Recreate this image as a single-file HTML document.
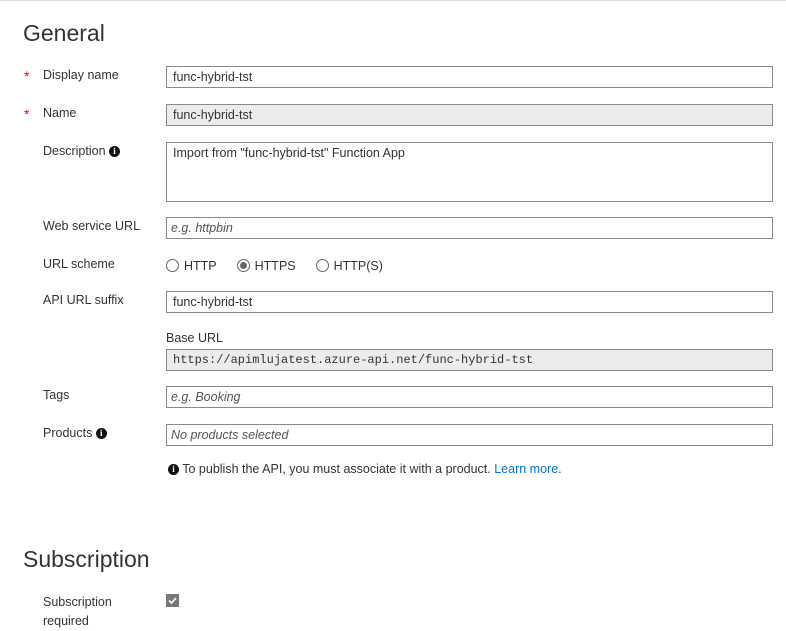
<!DOCTYPE html><html><head><style>
body{margin:0;width:786px;height:627px;background:#fff;font-family:"Liberation Sans",sans-serif;color:#333;font-size:12.5px;position:relative;overflow:hidden;border-top:1px solid #ddd;box-sizing:border-box}
.a{position:absolute}
h2{position:absolute;margin:0;font-weight:normal;font-size:23px;color:#333}
.l{position:absolute;left:43px}
.s{position:absolute;left:24px;color:#e00;font-size:14px}
.i{position:absolute;left:166px;width:607px;height:22px;border:1px solid #8a8a8a;background:#fff;line-height:20px;padding-left:6px;box-sizing:border-box}
.g{background:#ececec}
.p{color:#555;font-style:italic;padding-left:4px}
.info{display:inline-block;width:11px;height:11px;border-radius:50%;background:#111;color:#fff;font-size:9px;font-weight:bold;text-align:center;line-height:11px;vertical-align:1px;font-family:"Liberation Serif",serif}
.r{display:inline-block;width:11px;height:11px;border:1px solid #666;border-radius:50%;vertical-align:-2px;margin-right:5px;position:relative}
</style></head><body>
<h2 style="left:23px;top:19px">General</h2>
<span class="s" style="top:67px">*</span><div class="l" style="top:67px">Display name</div>
<div class="i" style="top:65px">func-hybrid-tst</div>
<span class="s" style="top:105px">*</span><div class="l" style="top:105px">Name</div>
<div class="i g" style="top:103px">func-hybrid-tst</div>
<div class="l" style="top:143px">Description <span class="info">i</span></div>
<div class="i" style="top:141px;height:60px;line-height:20px">Import from "func-hybrid-tst" Function App</div>
<div class="l" style="top:218px">Web service URL</div>
<div class="i p" style="top:216px">e.g. httpbin</div>
<div class="l" style="top:256px">URL scheme</div>
<div class="a" style="left:166px;top:258px"><span class="r"></span>HTTP<span style="display:inline-block;width:20px"></span><span class="r"><span class="a" style="left:2px;top:2px;width:7px;height:7px;border-radius:50%;background:#666"></span></span>HTTPS<span style="display:inline-block;width:20px"></span><span class="r"></span>HTTP(S)</div>
<div class="l" style="top:292px">API URL suffix</div>
<div class="i" style="top:290px">func-hybrid-tst</div>
<div class="a" style="left:166px;top:330px">Base URL</div>
<div class="i g" style="top:348px;font-family:'Liberation Mono',monospace;font-size:12px">https://apimlujatest.azure-api.net/func-hybrid-tst</div>
<div class="l" style="top:387px">Tags</div>
<div class="i p" style="top:385px">e.g. Booking</div>
<div class="l" style="top:425px">Products <span class="info">i</span></div>
<div class="i p" style="top:423px">No products selected</div>
<div class="a" style="left:168px;top:461px"><span class="info">i</span> To publish the API, you must associate it with a product. <span style="color:#0072c6">Learn more</span>.</div>
<h2 style="left:23px;top:545px">Subscription</h2>
<div class="l" style="top:592px;line-height:19px">Subscription<br>required</div>
<div class="a" style="left:166px;top:593px;width:11px;height:11px;border:1px solid #777;background:#777"><svg width="11" height="11" class="a" style="left:0;top:0"><path d="M2 5.5L4.5 8L9 3" stroke="#fff" stroke-width="1.6" fill="none"/></svg></div>
</body></html>
